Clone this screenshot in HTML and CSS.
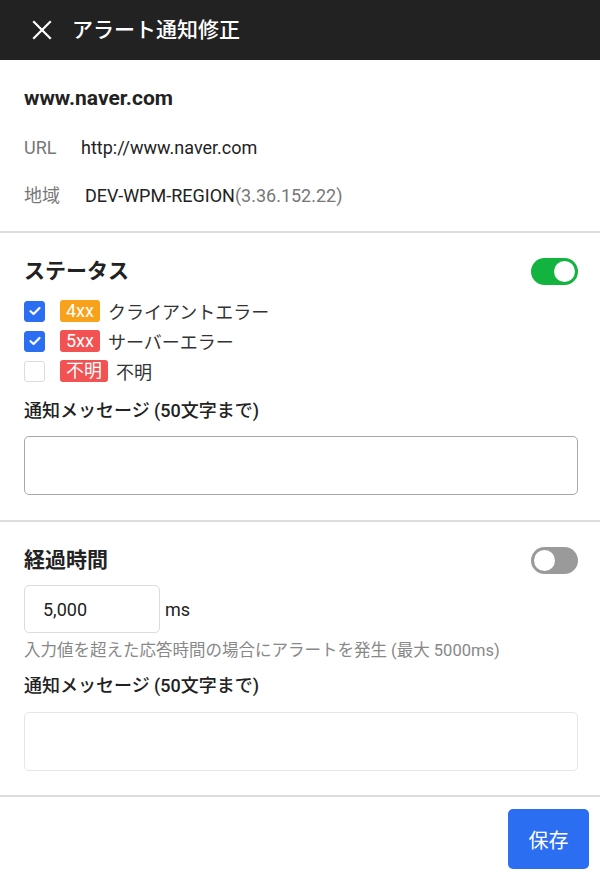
FILE: index.html
```html
<!DOCTYPE html>
<html lang="ja">
<head>
<meta charset="utf-8">
<link rel="stylesheet" href="styles.css">
</head>
<body>
<header class="appbar">
  <span class="close">
    <svg width="24" height="24" viewBox="0 0 24 24"><path d="M4 4L20 20M20 4L4 20" stroke="#fff" stroke-width="2.2" fill="none" stroke-linecap="square"/></svg>
  </span>
  <h1 class="apptitle">アラート通知修正</h1>
</header>

<section class="info">
  <div class="host">www.naver.com</div>
  <div class="row first"><span class="lab">URL</span><span class="val">http://www.naver.com</span></div>
  <div class="row"><span class="lab">地域</span><span class="val val-region">DEV-WPM-REGION<span class="ip">(3.36.152.22)</span></span></div>
</section>

<section class="block">
  <div class="block-head">
    <h2 class="block-title">ステータス</h2>
    <span class="toggle on"><span class="knob"></span></span>
  </div>
  <ul class="checks">
    <li class="check-row"><span class="cb checked"><svg width="14" height="14" viewBox="0 0 14 14"><path d="M2.5 7.2L5.6 10L11.5 4" stroke="#fff" stroke-width="2.2" fill="none" stroke-linecap="round" stroke-linejoin="round"/></svg></span><span class="badge orange">4xx</span><span class="ctext">クライアントエラー</span></li>
    <li class="check-row"><span class="cb checked"><svg width="14" height="14" viewBox="0 0 14 14"><path d="M2.5 7.2L5.6 10L11.5 4" stroke="#fff" stroke-width="2.2" fill="none" stroke-linecap="round" stroke-linejoin="round"/></svg></span><span class="badge red">5xx</span><span class="ctext">サーバーエラー</span></li>
    <li class="check-row"><span class="cb"></span><span class="badge red">不明</span><span class="ctext">不明</span></li>
  </ul>
  <div class="field-label">通知メッセージ (50文字まで)</div>
  <div class="textbox dark"></div>
</section>

<section class="block last">
  <div class="block-head">
    <h2 class="block-title">経過時間</h2>
    <span class="toggle off"><span class="knob"></span></span>
  </div>
  <div class="ms-row">
    <div class="numbox">5,000</div>
    <span class="unit">ms</span>
  </div>
  <div class="helper">入力値を超えた応答時間の場合にアラートを発生 (最大 5000ms)</div>
  <div class="field-label second">通知メッセージ (50文字まで)</div>
  <div class="textbox light"></div>
</section>

<footer class="footer">
  <button class="save">保存</button>
</footer>
</body>
</html>
```

FILE: styles.css
```css
* { box-sizing: border-box; }
body {
  margin: 0;
  font-family: Roboto, "Noto Sans CJK JP", sans-serif;
  color: #222;
  background: #fff;
}
.appbar {
  height: 60px;
  background: #222;
  display: flex;
  align-items: center;
  padding-left: 30px;
}
.close { width: 24px; height: 24px; display: flex; }
.apptitle {
  margin: 0 0 0 18px;
  font-size: 21px;
  font-weight: 500;
  color: #fff;
  line-height: 28px;
}
.info {
  padding: 26px 24px 23px;
  border-bottom: 2px solid #ddd;
}
.host {
  font-size: 21px;
  font-weight: 700;
  line-height: 24px;
}
.row {
  display: flex;
  margin-top: 24px;
  font-size: 18px;
  line-height: 24px;
}
.row.first { margin-top: 26px; }
.lab { color: #777; width: 57px; }
.val-region { margin-left: 4px; }
.ip { color: #777; }
.block {
  padding: 24px 22px 25px 24px;
  border-bottom: 2px solid #ddd;
}
.block.last { padding-bottom: 24px; }
.block-head {
  display: flex;
  align-items: center;
  justify-content: space-between;
}
.block-title {
  margin: 0;
  font-size: 21px;
  font-weight: 700;
  line-height: 28px;
}
.toggle {
  width: 47px;
  height: 27px;
  border-radius: 14px;
  display: flex;
  align-items: center;
  padding: 3px;
}
.toggle .knob {
  width: 21px;
  height: 21px;
  border-radius: 50%;
  background: #fff;
}
.toggle.on { background: #12b33f; justify-content: flex-end; }
.toggle.off { background: #9a9a9a; justify-content: flex-start; }
.checks {
  list-style: none;
  margin: 11px 0 0;
  padding: 0;
}
.check-row {
  height: 30px;
  display: flex;
  align-items: center;
  font-size: 18px;
}
.cb {
  width: 21px;
  height: 21px;
  border-radius: 3px;
  border: 1.5px solid #dcdcdc;
  display: flex;
  align-items: center;
  justify-content: center;
}
.cb.checked { background: #2b6ef1; border-color: #2b6ef1; }
.badge {
  margin-left: 15px;
  height: 22px;
  padding: 0 6px;
  border-radius: 3px;
  color: #fff;
  font-size: 18px;
  line-height: 22px;
}
.badge.orange { background: #f8a21c; }
.badge.red { background: #f25252; }
.ctext { margin-left: 8px; color: #333; }
.field-label {
  margin-top: 13px;
  font-size: 18px;
  font-weight: 500;
  line-height: 24px;
}
.textbox {
  margin-top: 13px;
  height: 59px;
  border-radius: 5px;
}
.textbox.dark { border: 1.5px solid #a8a8a8; }
.textbox.light { margin-top: 14px; border: 1px solid #e6e6e6; }
.ms-row {
  margin-top: 11px;
  display: flex;
  align-items: center;
}
.numbox {
  width: 136px;
  height: 48px;
  border: 1px solid #dcdcdc;
  border-radius: 5px;
  padding-left: 18px;
  display: flex;
  align-items: center;
  font-size: 18px;
}
.unit { margin-left: 5px; font-size: 18px; }
.helper {
  margin-top: 8px;
  font-size: 16.5px;
  line-height: 20px;
  color: #888;
}
.footer {
  display: flex;
  justify-content: flex-end;
  padding: 12px 11px 0 0;
}
.save {
  width: 81px;
  height: 60px;
  border: none;
  border-radius: 5px;
  background: #2b6ef1;
  color: #fff;
  font-family: Roboto, "Noto Sans CJK JP", sans-serif;
  font-size: 20px;
}
```
